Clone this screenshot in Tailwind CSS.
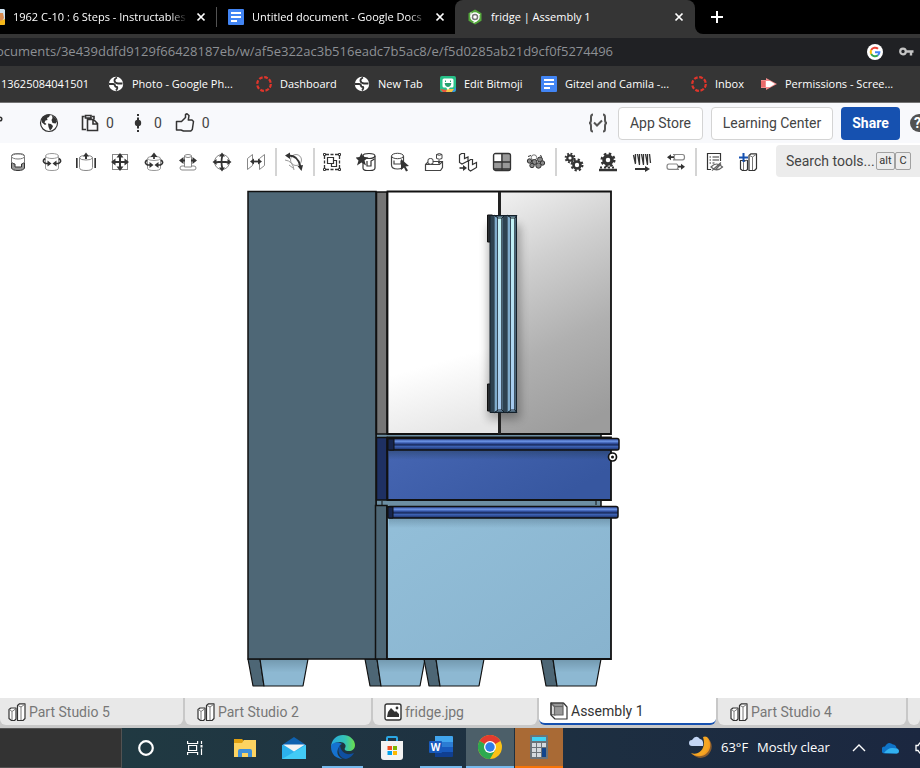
<!DOCTYPE html>
<html lang="en">

<head>
  <meta charset="UTF-8">
  <meta name="viewport" content="width=device-width, initial-scale=1.0">
  <title>fridge | Assembly 1</title>
  <script src="https://cdn.jsdelivr.net/npm/@tailwindcss/browser@4"></script>
</head>

<body class="min-h-screen flex flex-col bg-white overflow-x-hidden font-['Open_Sans','Noto_Sans',sans-serif]">

  <!-- Shared icons -->
  <svg class="hidden">
    <symbol id="close" viewBox="0 0 10 10">
      <path d="M1.500 1.500l7 7M8.500 1.500l-7 7" stroke="#fff" stroke-width="1.700" />
    </symbol>
    <symbol id="docs" viewBox="0 0 16 16">
      <rect width="16" height="16" rx="1" fill="#4285f4" />
      <path d="M3 4h10M3 8h10M3 12h6" stroke="#fff" stroke-width="1.800" />
    </symbol>
    <symbol id="site" viewBox="0 0 16 16">
      <circle cx="8" cy="8" r="7.200" fill="#fff" />
      <path d="M1 8h4q2 0 2 1.500T9 11q1 1-1 3.500M9 1.500q-3 1.500-2.500 3.500T10 7.500h4.500" fill="none" stroke="#353535" stroke-width="1.800" />
    </symbol>
    <symbol id="ring" viewBox="0 0 16 16">
      <circle cx="8" cy="8" r="6.800" fill="none" stroke="#e0352b" stroke-width="2.200" stroke-dasharray="3.740 1.600" />
    </symbol>
    <symbol id="parts" viewBox="0 0 18 18">
      <g fill="#fff" stroke="#333" stroke-width="1.200" stroke-linejoin="round">
        <path d="M1 6.500L3 5h5v11l-1.500 1.500H3.500L1 15.500z" />
        <path d="M9.500 2.500L11.500.8H17V15.500l-2 2H9.500z" />
      </g>
      <path d="M1.500 6.500L4 8.500v8.500M4 8.500L7.500 6M10 2.500l3 1.500v13M13 4l3.500-2.500" fill="none" stroke="#777" />
    </symbol>
  </svg>

  <!-- Browser tabs -->
  <header>
    <div class="h-[34px] flex bg-black text-white text-[11px]">
      <div class="w-[217px] shrink-0 flex items-center">
        <svg class="w-[5px] h-4 shrink-0" viewBox="0 0 5 16">
          <path d="M0 0h4l1 1v14l-1 1H0z" fill="#cfe3f2" />
          <path d="M0 4h3l1 5-2 3H0z" fill="#d98c52" />
          <path d="M0 12l5-2v5l-1 1H0z" fill="#f6b719" />
        </svg>
        <span class="ml-2 w-[174px] overflow-hidden whitespace-nowrap mask-r-from-90%">1962 C-10 : 6 Steps - Instructables</span>
        <button class="ml-[9px] w-[10px]" aria-label="Close tab"><svg class="size-[10px]"><use href="#close" /></svg></button>
        <span class="ml-auto w-px h-5 bg-neutral-600"></span>
      </div>
      <div class="w-[238px] shrink-0 flex items-center pl-[11px] pr-[10px]">
        <svg class="size-4 shrink-0"><use href="#docs" /></svg>
        <span class="ml-2 w-[174px] overflow-hidden whitespace-nowrap mask-r-from-90%">Untitled document - Google Docs</span>
        <button class="ml-auto w-[10px]" aria-label="Close tab"><svg class="size-[10px]"><use href="#close" /></svg></button>
      </div>
      <div class="w-[240px] shrink-0 flex items-center pl-3 pr-[11px] bg-[#353535] rounded-t-lg">
        <svg class="size-4 shrink-0" viewBox="0 0 16 16">
          <path d="M8 .5l6.500 3.700v7.600L8 15.500l-6.500-3.700V4.200z" fill="#55a83c" />
          <circle cx="8" cy="8" r="4" fill="#777" stroke="#fff" stroke-width="1.400" />
          <circle cx="8" cy="8" r="1.800" fill="#fff" />
          <path d="M4 8V3.500M10 4.500l3 1.500M10 11.500L6.500 13.500" stroke="#fff" stroke-width="1.200" />
        </svg>
        <span class="ml-2">fridge | Assembly 1</span>
        <button class="ml-auto w-[10px]" aria-label="Close tab"><svg class="size-[10px]"><use href="#close" /></svg></button>
      </div>
      <div class="flex-1 bg-[#353535]">
        <div class="h-full rounded-bl-lg bg-black flex items-center pl-4">
          <button aria-label="New tab">
            <svg class="size-3" viewBox="0 0 12 12"><path d="M6 0v12M0 6h12" stroke="#fff" stroke-width="2" /></svg>
          </button>
        </div>
      </div>
    </div>

    <!-- Address bar -->
    <div class="bg-[#353535] pt-1">
      <div class="h-7 bg-[#202124] flex items-center overflow-hidden">
        <label class="sr-only" for="address">Address</label>
        <input id="address" class="flex-1 min-w-0 -indent-1 text-[13px] text-[#8d9094] bg-transparent outline-none" value="ocuments/3e439ddfd9129f66428187eb/w/af5e322ac3b516eadc7b5ac8/e/f5d0285ab21d9cf0f5274496">
        <svg class="size-4 shrink-0 mr-4" viewBox="0 0 16 16">
          <circle cx="8" cy="8" r="8" fill="#fff" />
          <g fill="none" stroke-width="2">
            <path d="M4.200 6A4.400 4.400 0 0 1 11 4.800" stroke="#ea4335" />
            <path d="M4.200 10a4.400 4.400 0 0 1 0-4" stroke="#fbbc05" />
            <path d="M4.200 10a4.400 4.400 0 0 0 6.700 1.300" stroke="#34a853" />
            <path d="M8 8.200h4.400a4.400 4.400 0 0 1-1.500 3.100" stroke="#4285f4" />
          </g>
        </svg>
        <svg class="w-[15px] h-4 shrink-0 mr-[6px]" viewBox="0 0 15 16">
          <circle cx="4" cy="7.500" r="2.800" fill="none" stroke="#c4c4c4" stroke-width="2.200" />
          <path d="M7 7.500h7.500M12 7.500v4" stroke="#c4c4c4" stroke-width="2.400" />
        </svg>
      </div>
    </div>

    <!-- Bookmarks -->
    <nav class="h-[37px] bg-[#353535] border-b border-neutral-500 text-white text-[11px] whitespace-nowrap grid grid-cols-[108px_148px_98px_86px_101px_150px_70px_1fr] items-center">
      <a href="#" class="pl-px">13625084041501</a>
      <a href="#" class="flex items-center gap-2"><svg class="size-4"><use href="#site" /></svg>Photo - Google Ph...</a>
      <a href="#" class="flex items-center gap-2"><svg class="size-4"><use href="#ring" /></svg>Dashboard</a>
      <a href="#" class="flex items-center gap-2"><svg class="size-4"><use href="#site" /></svg>New Tab</a>
      <a href="#" class="flex items-center gap-2">
        <svg class="size-4" viewBox="0 0 16 16">
          <rect width="16" height="16" rx="2" fill="#28c088" />
          <path d="M0 13l3 3h4v-2z" fill="#e9573f" />
          <path d="M6 16h6l2-3H7z" fill="#f6c244" />
          <path d="M12 16h2l2-2v-3z" fill="#3b8ded" />
          <path d="M4 2.500h8q1.500 0 1.500 1.500v6q0 1.500-1.500 1.500h-2L8 14l-2-2.500H4Q2.500 11.500 2.500 10V4Q2.500 2.500 4 2.500z" fill="#fff" />
          <path d="M5 7.500h6q-.5 3-3 3t-3-3zM5.500 4.500v1.500M10.500 4.500v1.500" fill="#28a070" stroke="#28a070" />
        </svg>Edit Bitmoji</a>
      <a href="#" class="flex items-center gap-2"><svg class="size-4"><use href="#docs" /></svg>Gitzel and Camila -...</a>
      <a href="#" class="flex items-center gap-2"><svg class="size-4"><use href="#ring" /></svg>Inbox</a>
      <a href="#" class="flex items-center gap-2">
        <svg class="size-4" viewBox="0 0 16 16">
          <path d="M0 4h5V2l11 6-11 6v-2H0z" fill="#f28b8b" />
          <path d="M5 5h4l5 3-5 3H5z" fill="#fff" />
          <path d="M0 5h4v6H0z" fill="#e96a6a" />
        </svg>Permissions - Scree...</a>
    </nav>
  </header>

  <!-- Document header -->
  <div class="h-10 bg-[#f8f9fc] flex items-center overflow-hidden font-['Roboto',sans-serif] text-sm text-[#444]">
    <svg class="w-[3px] h-5 shrink-0" viewBox="0 0 3 20"><circle cx="0" cy="6" r="1.800" fill="none" stroke="#333" stroke-width="1.500" /></svg>
    <svg class="size-5 ml-9 shrink-0" viewBox="0 0 20 20">
      <circle cx="10" cy="10" r="8.500" fill="#fff" stroke="#333" stroke-width="1.200" />
      <path d="M2.500 7q1-4 5.500-5.500l3 .5-1 2-2 1 .5 2-2 .5-1 2 2 1.500L6 12 3 9.500zM9 10.500l3 .5 2 2-1 2.500-2 2-1.500-3.500zM13 2.500q4 2 5 6l-1.500 2-3-.5-1-3 1-2z" fill="#333" />
    </svg>
    <svg class="size-[18px] ml-[22px] shrink-0" viewBox="0 0 18 18">
      <path d="M5 15.500H1.500v-13h2M13 5V2.500h-2M4.500 1.500H10V4H4.500zM6.500 5.500h6l4 4v7h-10zM12 5.500V10h4.500" fill="none" stroke="#333" stroke-width="1.600" />
    </svg>
    <span class="ml-[7px]">0</span>
    <svg class="w-2 h-5 ml-5 shrink-0" viewBox="0 0 8 20">
      <path d="M4 1v2M4 4.500v3M4 12.500v3M4 17v2" stroke="#333" stroke-width="2" />
      <circle cx="4" cy="10" r="3.200" fill="#333" />
    </svg>
    <span class="ml-3">0</span>
    <svg class="size-5 ml-[13px] shrink-0" viewBox="0 0 20 20">
      <path d="M1.500 8.500h5l4-4V1.500l1.500-.7 2 1.700-.7 4.500H17l1.500 1.500-1.200 8-1.500 1.500H8.500L6 17H1.500z" fill="none" stroke="#333" stroke-width="1.500" stroke-linejoin="round" />
    </svg>
    <span class="ml-[7px]">0</span>
    <div class="ml-auto flex items-center gap-2 shrink-0">
      <svg class="size-5 mr-[2px]" viewBox="0 0 20 20">
        <path d="M5 1.500Q3 1.500 3 4v3q0 3-2 3 2 0 2 3v3q0 2.500 2 2.500M15 1.500q2 0 2 2.500v3q0 3 2 3-2 0-2 3v3q0 2.500-2 2.500M6 9.500l3 3 5-5" fill="none" stroke="#555" stroke-width="2" />
      </svg>
      <button class="h-[33px] w-[85px] bg-white border border-neutral-300 rounded">App Store</button>
      <button class="h-[33px] w-[122px] bg-white border border-neutral-300 rounded">Learning Center</button>
      <button class="h-[33px] w-[59px] bg-[#1651b0] text-white font-bold rounded">Share</button>
      <span class="ml-[2px] w-[10px] h-[18px] rounded-l-full bg-neutral-600 text-white font-bold flex items-center pl-1 overflow-hidden">?</span>
    </div>
  </div>

  <!-- Assembly tools -->
  <div class="h-[38px] flex items-center pl-px overflow-hidden font-['Roboto',sans-serif] *:shrink-0">
    <button class="w-[34px] grid place-items-center" aria-label="Fastened mate">
      <svg class="size-5" viewBox="0 0 20 20" fill="none">
        <path d="M3.500 10v6q1 2.500 6.500 2.500t6.500-2.500v-6q-1 2-3 2v3H7v-3q-2.500 0-3.500-2z" fill="#999" stroke="#333" />
        <path d="M3.500 11V4q0-2.500 6.500-2.500T16.500 4v7" stroke="#777" />
        <ellipse cx="10" cy="4.500" rx="6.500" ry="2.500" fill="#fff" stroke="#777" />
      </svg>
    </button>
    <button class="w-[34px] grid place-items-center" aria-label="Revolute mate">
      <svg class="size-5" viewBox="0 0 20 20" fill="none">
        <path d="M3.500 4.500V16q0 2.500 6.500 2.500t6.500-2.500V4.500" stroke="#999" />
        <ellipse cx="10" cy="4" rx="6.500" ry="2.500" fill="#fff" stroke="#999" />
        <path d="M3 6.500q-3.500 3 .5 5H6M17 6.500q3.500 3-.5 5H14" stroke="#333" stroke-width="1.700" />
        <path d="M5.500 8.500l4 3-4 3zM14.500 8.500l-4 3 4 3z" fill="#333" />
      </svg>
    </button>
    <button class="w-[34px] grid place-items-center" aria-label="Slider mate">
      <svg class="size-5" viewBox="0 0 20 20" fill="none">
        <path d="M3.500 6v9.500q0 3 6.500 3t6.500-3V6q0-2.500-6.500-2.500T3.500 6q1 2 6.500 2t6.500-2" stroke="#888" />
        <path d="M.8 6v10M19.200 6v10" stroke="#333" stroke-width="1.700" />
        <path d="M10 7V3" stroke="#333" stroke-width="2" />
        <path d="M7 4.500l3-4 3 4z" fill="#333" />
      </svg>
    </button>
    <button class="w-[34px] grid place-items-center" aria-label="Planar mate">
      <svg class="size-5" viewBox="0 0 20 20" fill="none">
        <rect x="2.500" y="2.500" width="15" height="15" stroke="#888" />
        <path d="M10 4v12M4 10h12" stroke="#333" stroke-width="2" />
        <path d="M6.500 5.500L10 1l3.500 4.500zM6.500 14.500L10 19l3.500-4.500zM5.500 6.500L1 10l4.500 3.500zM14.500 6.500L19 10l-4.500 3.500z" fill="#333" />
      </svg>
    </button>
    <button class="w-[34px] grid place-items-center" aria-label="Cylindrical mate">
      <svg class="size-5" viewBox="0 0 20 20" fill="none">
        <path d="M3.500 6.500V16q0 2.500 6.500 2.500t6.500-2.500V6.500q0-2-6.500-2t-6.500 2q1 2 6.500 2t6.500-2" stroke="#999" />
        <path d="M3 8q-3.500 3 .5 5H6M17 8q3.500 3-.5 5H14M10 7V3" stroke="#333" stroke-width="1.700" />
        <path d="M5.500 10l4 3-4 3zM14.500 10l-4 3 4 3zM6.500 5L10 .5 13.500 5z" fill="#333" />
      </svg>
    </button>
    <button class="w-[34px] grid place-items-center" aria-label="Pin slot mate">
      <svg class="size-5" viewBox="0 0 20 20" fill="none">
        <path d="M6.500 4v11h7V4q0-1.500-3.500-1.500T6.500 4q1 1.500 3.500 1.500T13.500 4M6.500 14H4q-2 0-2 2t2 2h12q2 0 2-2t-2-2h-2.500" stroke="#888" />
        <path d="M3 8.500h4M13 8.500h4" stroke="#333" stroke-width="1.800" />
        <path d="M5.500 5L1 8.500 5.500 12zM14.500 5L19 8.500 14.500 12z" fill="#333" />
      </svg>
    </button>
    <button class="w-[34px] grid place-items-center" aria-label="Ball mate">
      <svg class="size-5" viewBox="0 0 20 20" fill="none">
        <circle cx="10" cy="10" r="7.500" stroke="#888" />
        <path d="M10.500 3q-2 7 0 14M3 10.500q7-1.500 14 0" stroke="#333" stroke-width="1.800" />
        <path d="M7 4.500L10 .5l3 4zM7 15.500l3 4 3-4zM4.500 7L.5 10l4 3zM15.500 7l4 3-4 3z" fill="#333" />
      </svg>
    </button>
    <button class="w-[34px] grid place-items-center" aria-label="Parallel mate">
      <svg class="size-5" viewBox="0 0 20 20" fill="none">
        <path d="M1.500 6.500l5-4v11l-5 4zM13.500 6.500l5-4v11l-5 4z" stroke="#888" />
        <path d="M6 9.500h8" stroke="#333" stroke-width="1.800" />
        <path d="M8 6.500l-4 3 4 3zM12 6.500l4 3-4 3z" fill="#333" />
      </svg>
    </button>
    <span class="w-1 h-7 border-r-2 border-neutral-300"></span>
    <button class="w-[34px] grid place-items-center" aria-label="Tangent mate">
      <svg class="size-5" viewBox="0 0 20 20" fill="none">
        <circle cx="12" cy="8" r="5.500" stroke="#999" />
        <path d="M1 8q8 1 9 10M5 13l4 3" stroke="#999" />
        <path d="M5 3.500q9 0 11.500 11" stroke="#333" stroke-width="1.800" />
        <path d="M6 .5L1 3.500 6 7zM13.500 14l5.500-1-1.500 6z" fill="#333" />
      </svg>
    </button>
    <span class="w-1 h-7 border-r-2 border-neutral-300"></span>
    <button class="w-[34px] grid place-items-center" aria-label="Group">
      <svg class="size-5" viewBox="0 0 20 20" fill="none" stroke="#333">
        <path d="M4 2.500h12M4 17.500h12M2.500 4v12M17.500 4v12" stroke-width="1.300" stroke-dasharray="3 1.500" />
        <path d="M1.500 1.500h2v2h-2zM16.500 1.500h2v2h-2zM1.500 16.500h2v2h-2zM16.500 16.500h2v2h-2z" fill="#fff" />
        <path d="M5.500 5.500h6v6h-6zM9.500 11.500v3h5v-6h-3" stroke-width="1.200" />
      </svg>
    </button>
    <button class="w-[34px] grid place-items-center" aria-label="Mate connector">
      <svg class="size-5" viewBox="0 0 20 20" fill="none">
        <path d="M7 4q0-2.500 6-2.500t6 2.500v12q0 2.500-5 2.500h-3q-4 0-4-2.500z" fill="#fff" stroke="#333" stroke-width="1.200" />
        <path d="M7 4q1 2.500 6 2.500T19 4M11 9v5h4V9l3.500-2" stroke="#333" stroke-width="1.200" />
        <path d="M5.500 1l2 4 5 .5-4 3 1.500 5-4.500-3-4.500 3 1.500-5-3-3 4-.5z" fill="#333" />
      </svg>
    </button>
    <button class="w-[34px] grid place-items-center" aria-label="Select part">
      <svg class="size-5" viewBox="0 0 20 20" fill="none">
        <path d="M1.500 4v9q0 4 6 4t6-4V4M4 8.500V12h7V8.500" stroke="#444" stroke-width="1.200" />
        <ellipse cx="7.500" cy="4" rx="6" ry="2.700" fill="#fff" stroke="#444" />
        <path d="M11 7l8 7-3.500.5 2.500 4-2 1-2-4-3 2.500z" fill="#333" />
      </svg>
    </button>
    <button class="w-[34px] grid place-items-center" aria-label="Snap mode">
      <svg class="size-5" viewBox="0 0 20 20" fill="none" stroke="#444">
        <path d="M1.500 12.500l3-3h14v6l-2 3h-15zM1.500 12.500h14l3-3" stroke-width="1.200" />
        <path d="M4 11.500V8q0-1.500 2.500-1.500T9 8v3.500q-2.500 1.500-5 0zM12.500 2.500v4q3 1.500 5.500 0v-4q-2.500-2-5.500 0 2.500 1.500 5.500 0" fill="#fff" />
        <path d="M15 8.500v3" stroke-width="2" />
      </svg>
    </button>
    <button class="w-[34px] grid place-items-center" aria-label="Replicate">
      <svg class="size-5" viewBox="0 0 20 20" fill="none" stroke="#333" stroke-width="1.200">
        <path d="M1.500 3l2-1.500h3v5L10 5v4l-6 3-2.500-1.500zM10.500 9l2-1.500h2v5l4-2v5l-6 3.500-2-1.500z" />
        <path d="M1.500 16h5" stroke-width="1.600" />
        <path d="M5 13l4 3-4 3z" fill="#333" stroke="none" />
      </svg>
    </button>
    <button class="w-[34px] grid place-items-center" aria-label="Linear pattern">
      <svg class="size-5" viewBox="0 0 20 20">
        <rect x="1.500" y="1.500" width="17" height="17" rx="2" fill="#999" stroke="#333" stroke-width="1.300" />
        <path d="M2.500 2.500h6.500v6.500H2.500z" fill="#fff" />
        <path d="M10 1.500v17M1.500 10h17M2 17h16" stroke="#333" stroke-width="1.300" />
      </svg>
    </button>
    <button class="w-[34px] grid place-items-center" aria-label="Circular pattern">
      <svg class="size-5" viewBox="0 0 20 20" fill="#888" stroke="#333">
        <circle cx="8" cy="5.500" r="2.700" fill="#fff" stroke="#777" />
        <circle cx="3.500" cy="9" r="2.200" />
        <circle cx="8.500" cy="10" r="2.500" />
        <circle cx="14" cy="7.500" r="2.500" />
        <circle cx="16.500" cy="11" r="2.200" />
        <circle cx="6" cy="13.500" r="2.200" />
        <circle cx="12.500" cy="13.500" r="2.700" />
        <path d="M2 4.500l3-1M14 3.500l2 1" />
      </svg>
    </button>
    <span class="w-1 h-7 border-r-2 border-neutral-300"></span>
    <button class="w-[34px] grid place-items-center" aria-label="Gear relation">
      <svg class="size-5" viewBox="0 0 20 20" fill="none" stroke="#333">
        <circle cx="6" cy="6" r="2.700" stroke-width="2.200" />
        <circle cx="6" cy="6" r="4.400" stroke-width="2" stroke-dasharray="1.800 1.656" />
        <circle cx="13" cy="13" r="3.500" stroke-width="2.600" />
        <circle cx="13" cy="13" r="5.400" stroke-width="2.200" stroke-dasharray="2.200 2.041" />
      </svg>
    </button>
    <button class="w-[34px] grid place-items-center" aria-label="Rack and pinion relation">
      <svg class="size-5" viewBox="0 0 20 20" fill="none" stroke="#333">
        <circle cx="10" cy="8" r="4" stroke-width="3.500" />
        <circle cx="10" cy="8" r="6.300" stroke-width="2.400" stroke-dasharray="2.500 2.448" />
        <path d="M1 18h18" stroke-width="2.500" />
        <path d="M2 15.500h16" stroke-width="2" stroke-dasharray="2 2" />
      </svg>
    </button>
    <button class="w-[34px] grid place-items-center" aria-label="Screw relation">
      <svg class="size-5" viewBox="0 0 20 20" fill="none" stroke="#333">
        <path d="M1.500 3l2 9M5.500 2l2 11M9.500 2l2 11M13.500 2l2 11M17.500 2l1 9M3.500 2v9M7.500 2v10M11.500 2v10M15.500 2v10" stroke-width="1.300" />
        <path d="M3 17h11" stroke-width="2" />
        <path d="M13 14l5 3-5 3z" fill="#333" stroke="none" />
      </svg>
    </button>
    <button class="w-[34px] grid place-items-center" aria-label="Linear relation">
      <svg class="size-5" viewBox="0 0 20 20" fill="none">
        <path d="M7 2.500h9.500q2 0 2 2.700t-2 2.700H7M11 12H3q-2 0-2 2.700t2 2.700h10M9 2.500q-2 2.700 0 5.400M11 12q2 2.700 0 5.400" stroke="#888" stroke-width="1.200" />
        <path d="M4 5.200h4M12 14.700h4" stroke="#333" stroke-width="1.800" />
        <path d="M5 2.200l-4 3 4 3zM15 11.700l4 3-4 3z" fill="#333" />
      </svg>
    </button>
    <span class="w-1 h-7 border-r-2 border-neutral-300"></span>
    <button class="w-[34px] grid place-items-center" aria-label="Bill of materials">
      <svg class="size-5" viewBox="0 0 20 20" fill="none" stroke="#333">
        <path d="M7 17.500H3.500v-16h13V9" stroke-width="1.200" />
        <path d="M5.500 5h1.500M5.500 8h1.500M5.500 11h1.500M8.500 5H15M8.500 8H15M8.500 11h2" />
        <path d="M7 15q5.500-6 11.500 0-6 5.500-11.500 0zM8 18.500l9-8M11 18l6-6" stroke="#666" stroke-width="1.200" />
      </svg>
    </button>
    <button class="w-[34px] grid place-items-center" aria-label="Create part studio">
      <svg class="size-5" viewBox="0 0 20 20">
        <g fill="#fff" stroke="#333" stroke-width="1.200" stroke-linejoin="round">
          <path d="M2.500 8.500H9.500v9L8 18.500H4.500l-2-1.500z" />
          <path d="M11 3.500L13 1.800h5.500V16.500l-2 2H11z" />
        </g>
        <path d="M5.500 10v8M5.500 10l3.500-2M11.500 3.500l3 1.500v13M14.500 5l3.500-2.500" fill="none" stroke="#777" />
        <path d="M5.500 1v9M1 5.500h9" stroke="#1651b0" stroke-width="2" />
      </svg>
    </button>
    <div class="flex-1 self-start mt-[2px] ml-[11px] h-8 bg-[#ececec] rounded-l flex items-center pl-[10px] text-[#333]">
      <label class="sr-only" for="search-tools">Search tools</label>
      <input id="search-tools" class="w-[90px] text-sm placeholder:text-[#444] bg-transparent outline-none" placeholder="Search tools...">
      <kbd class="h-[18px] w-[19px] flex items-center justify-center font-['Roboto',sans-serif] text-[11px] border border-neutral-400 rounded-xs">alt</kbd>
      <kbd class="h-[18px] w-4 flex items-center justify-center font-['Roboto',sans-serif] text-[11px] border border-neutral-400 rounded-xs">C</kbd>
    </div>
  </div>

  <!-- Model view -->
  <main class="flex-1 min-h-0 flex">
    <svg class="w-full" viewBox="0 181 920 517" role="img" aria-label="Fridge assembly">
      <defs>
        <linearGradient id="doorL" gradientUnits="userSpaceOnUse" x1="410" y1="370" x2="430" y2="440">
          <stop offset="0" stop-color="#fff" />
          <stop offset="1" stop-color="#e6e6e6" />
        </linearGradient>
        <linearGradient id="doorR" gradientUnits="userSpaceOnUse" x1="500" y1="200" x2="610" y2="410">
          <stop offset="0" stop-color="#eee" />
          <stop offset="0.300" stop-color="#cfcfcf" />
          <stop offset="0.650" stop-color="#b0b0b0" />
          <stop offset="1" stop-color="#9c9c9c" />
        </linearGradient>
        <linearGradient id="drawer" x1="0" y1="0" x2="1" y2="0.500">
          <stop offset="0" stop-color="#4767b4" />
          <stop offset="1" stop-color="#3757a0" />
        </linearGradient>
        <linearGradient id="freezer" x1="0" y1="0" x2="1" y2="1">
          <stop offset="0" stop-color="#93bfd9" />
          <stop offset="1" stop-color="#88b3ce" />
        </linearGradient>
        <linearGradient id="bar" x1="0" y1="0" x2="0" y2="1">
          <stop offset="0" stop-color="#2c4794" />
          <stop offset="0.250" stop-color="#6b92e2" />
          <stop offset="0.400" stop-color="#3758ab" />
          <stop offset="0.550" stop-color="#182a5c" />
          <stop offset="0.700" stop-color="#3d62b4" />
          <stop offset="1" stop-color="#1a2c60" />
        </linearGradient>
        <linearGradient id="grip" gradientUnits="userSpaceOnUse" x1="0" y1="215" x2="0" y2="413">
          <stop offset="0" stop-color="#c4f4f6" />
          <stop offset="1" stop-color="#a4c8ee" />
        </linearGradient>
        <linearGradient id="foot" x1="0" y1="0" x2="0" y2="1">
          <stop offset="0" stop-color="#7298ae" />
          <stop offset="0.500" stop-color="#8db8d2" />
        </linearGradient>
        <linearGradient id="shade" x1="0" y1="0" x2="0" y2="1">
          <stop offset="0" stop-color="#1b3040" stop-opacity="0.400" />
          <stop offset="1" stop-color="#1b3040" stop-opacity="0" />
        </linearGradient>
        <filter id="soft" x="-1" y="-0.100" width="3" height="1.200">
          <feGaussianBlur stdDeviation="5" />
        </filter>
        <clipPath id="doors"><path d="M388 192h223v242H388z" /></clipPath>
        <g id="leg" stroke="#111" stroke-width="1.200" stroke-linejoin="round">
          <path d="M0 659h12l4 27H5z" fill="#4d6675" />
          <path d="M12 659h48l-5 27H16z" fill="url(#foot)" />
        </g>
      </defs>

      <!-- legs -->
      <use href="#leg" x="248" />
      <use href="#leg" x="365" />
      <use href="#leg" x="424" />
      <use href="#leg" x="541" />

      <!-- cabinet -->
      <g stroke="#111" stroke-width="1.500">
        <path d="M376 430h225v80H376z" fill="#6d8fa3" />
        <path d="M248 191.500h128V659H248z" fill="#4e6776" />
      </g>

      <!-- doors -->
      <path d="M376.500 192H387v242h-10.500z" fill="#757575" stroke="#111" stroke-width="1.500" />
      <path d="M387 192h113v242H387z" fill="url(#doorL)" />
      <path d="M500 192h111v242H500z" fill="url(#doorR)" />
      <g clip-path="url(#doors)">
        <path d="M488 225h32v194h-32z" fill="#000" opacity="0.300" filter="url(#soft)" />
      </g>
      <path d="M387.500 191.500H611V434H387.500z" fill="none" stroke="#111" stroke-width="1.800" />
      <path d="M499.500 192v242" stroke="#222" stroke-width="3" />

      <!-- door handles -->
      <path d="M487.500 215h5v27h-5zM487.500 384h5v27h-5z" fill="#2a2d30" stroke="#111" />
      <path d="M490 215h27v198h-27z" fill="#4a6578" />
      <path d="M490 215h4v198h-4zM503 215h4v198h-4z" fill="#2e4250" />
      <path d="M495 217h3v194h-3zM508 217h3v194h-3z" fill="#7fabcb" />
      <path d="M498 217h4v194h-4zM511 217h4v194h-4z" fill="url(#grip)" />
      <path d="M497.500 218v192M501.500 218v192M510.500 218v192M514.500 218v192" stroke="#14202a" stroke-opacity="0.700" fill="none" />
      <path d="M490 215.500h26.500v197H490zM494 215l4 3h4l3-3M507 215l4 3h4l2-3M494 413l4-3h4l3 3M507 413l4-3h4l2 3" fill="none" stroke="#14202a" />

      <!-- middle drawer -->
      <path d="M376.500 437.500H387V500h-10.500z" fill="#1e3063" stroke="#111" stroke-width="1.500" />
      <path d="M387.500 437.500H611V500H387.500z" fill="url(#drawer)" stroke="#111" stroke-width="1.800" />
      <path d="M389 450h221v10H389z" fill="url(#shade)" />
      <rect x="388" y="438.500" width="231" height="11.500" rx="2" fill="url(#bar)" stroke="#111" stroke-width="1.500" />
      <path d="M388 439h6v11h-6z" fill="#17264f" stroke="#111" />
      <path d="M382 501v4M596 501v4" stroke="#111" />

      <!-- freezer drawer -->
      <path d="M375.500 505.500H387V659h-11.500z" fill="#4e6776" stroke="#111" stroke-width="1.500" />
      <path d="M387 507h224v152H387z" fill="url(#freezer)" stroke="#111" stroke-width="1.800" />
      <path d="M389 518h221v10H389z" fill="url(#shade)" opacity="0.600" />
      <rect x="388" y="506.500" width="230" height="11.500" rx="2" fill="url(#bar)" stroke="#111" stroke-width="1.500" />
      <path d="M388 507h5v11h-5z" fill="#17264f" stroke="#111" />

      <!-- origin -->
      <circle cx="612.500" cy="457" r="4" fill="#fff" stroke="#111" stroke-width="1.700" />
      <circle cx="612.500" cy="457" r="1.500" fill="#111" />
    </svg>
  </main>

  <!-- Document tabs -->
  <nav class="h-[30px] pb-[3px] bg-[#c8c8c8] grid grid-cols-[183px_186px_164px_177px_188px_1fr] gap-[2px] font-['Roboto',sans-serif] text-sm text-[#777] *:flex *:items-center *:gap-[3px] *:rounded-b-md *:bg-[#e8e8e8]">
    <a href="#" class="pl-2"><svg class="size-[18px]"><use href="#parts" /></svg>Part Studio 5</a>
    <a href="#" class="pl-3"><svg class="size-[18px]"><use href="#parts" /></svg>Part Studio 2</a>
    <a href="#" class="pl-[11px]">
      <svg class="size-[18px]" viewBox="0 0 18 18">
        <rect x="1" y="1" width="16" height="16" rx="2" fill="#fff" stroke="#333" stroke-width="1.400" />
        <path d="M3 14l1-5 3-4 4 4 1-1 3 3v3z" fill="#333" />
        <circle cx="13" cy="5" r="1.400" fill="#333" />
      </svg>fridge.jpg</a>
    <a href="#" class="pl-[11px] bg-white! border-b-2 border-[#1651b0] text-[#333]">
      <svg class="size-[18px]" viewBox="0 0 18 18" stroke-width="1.200" stroke-linejoin="round">
        <path d="M1 1h12.500L17 5v12H5l-4-4z" fill="#fff" />
        <path d="M1 1l4 4v8l-4-.5z" fill="#ddd" stroke="#555" />
        <path d="M4.500 4.500L1 1h12v12H4.500z" fill="#999" stroke="#666" />
        <path d="M4.500 4.500H13" stroke="#666" />
        <path d="M1 1h12.500L17 5v12H5l-4-4z" fill="none" stroke="#333" />
      </svg>Assembly 1</a>
    <a href="#" class="pl-3"><svg class="size-[18px]"><use href="#parts" /></svg>Part Studio 4</a>
    <span></span>
  </nav>

  <!-- Taskbar -->
  <footer class="h-10 flex items-stretch bg-linear-to-r from-[#213c42] to-[#1b2740] text-white text-[13px] overflow-hidden whitespace-nowrap">
    <div class="w-[122px] shrink-0 bg-[#333] border border-l-0 border-neutral-600"></div>
    <button class="w-12 mr-px grid place-items-center" aria-label="Cortana">
      <svg class="size-4" viewBox="0 0 16 16"><circle cx="8" cy="8" r="6.800" fill="none" stroke="#fff" stroke-width="2.200" /></svg>
    </button>
    <button class="w-12 mr-px grid place-items-center" aria-label="Task view">
      <svg class="size-4" viewBox="0 0 16 16" fill="none" stroke="#fff" stroke-width="1.200">
        <path d="M.6 1v2.500h10V1M.6 15v-2.500h10V15M1.600 5.500h8v5h-8zM14.500 1v3M14.500 8.500V15" />
        <path d="M13.500 5h2v2.500h-2z" fill="#fff" stroke="none" />
      </svg>
    </button>
    <button class="w-[49px] grid place-items-center" aria-label="File Explorer">
      <svg class="size-6" viewBox="0 0 24 24">
        <path d="M1 3h8l2 2v4H1z" fill="#e0a010" />
        <path d="M1 7h8l2-3h12v17H1z" fill="#fcd361" />
        <path d="M5 21v-6q0-2 2-2h10q2 0 2 2v6h-4v-4H9v4z" fill="#3f8fd8" />
      </svg>
    </button>
    <button class="w-[49px] grid place-items-center" aria-label="Mail">
      <svg class="size-6" viewBox="0 0 24 24">
        <path d="M0 9l12-8 12 8v6H0z" fill="#0f62b0" />
        <path d="M0 9h24v14H0z" fill="#2cb0ec" />
        <path d="M0 23L24 9v14z" fill="#42cbf6" />
        <path d="M1 8.500h22L12 15.500z" fill="#f4f4f4" />
      </svg>
    </button>
    <button class="w-[49px] px-1 flex" aria-label="Edge">
      <span class="w-full h-full grid place-items-center border-b-2 border-[#76b9ed]">
        <svg class="size-6" viewBox="0 0 24 24">
          <defs>
            <linearGradient id="edgeTop" x1="0" y1="0.500" x2="1" y2="0.500">
              <stop offset="0" stop-color="#26a9e0" />
              <stop offset="0.600" stop-color="#35c3b4" />
              <stop offset="1" stop-color="#6be04a" />
            </linearGradient>
          </defs>
          <path d="M0 13C0 4 6 0 12 0c7 0 12 5 12 10 0 4-3 6-6 6-4 0-5-1.500-4-3 2-3-1-6-5-6-5 0-9 3-9 6z" fill="url(#edgeTop)" />
          <path d="M0 12c0 7 5 12 12 12-4-1-8-6-4-12 1-2 2-3 3-3-5-3-11-1-11 3z" fill="#1572cf" />
          <path d="M9 10c-4 5 0 14 6 14 4-1 7-4 8-6-7 3-13 0-14-8z" fill="#0f4fa0" />
        </svg>
      </span>
    </button>
    <button class="w-[49px] grid place-items-center" aria-label="Microsoft Store">
      <svg class="size-6" viewBox="0 0 24 24">
        <path d="M7 6V2q0-1 1-1h8q1 0 1 1v4" fill="none" stroke="#2ba7e4" stroke-width="2" />
        <path d="M1 5h22v16q0 3-3 3H4q-3 0-3-3z" fill="#f3f3f3" />
        <path d="M7.500 10H12v4H7.500z" fill="#f04e23" />
        <path d="M13 10h4v4h-4z" fill="#7eb800" />
        <path d="M7.500 15H12v4H7.500z" fill="#00a2ed" />
        <path d="M13 15h4v4h-4z" fill="#fdb900" />
      </svg>
    </button>
    <button class="w-[50px] px-1 flex" aria-label="Word">
      <span class="w-full h-full grid place-items-center border-b-2 border-[#76b9ed]">
        <svg class="size-6" viewBox="0 0 24 24">
          <path d="M6 1h17q1 0 1 1v5H6z" fill="#41a5ee" />
          <path d="M6 7h18v5H6z" fill="#2b7cd3" />
          <path d="M6 12h18v5H6z" fill="#185abd" />
          <path d="M6 17h18v4q0 1-1 1H6z" fill="#103f91" />
          <rect y="6" width="13" height="12" rx="1" fill="#185abd" />
          <text x="6.500" y="15.500" text-anchor="middle" font-family="Open Sans" font-size="10" font-weight="700" fill="#fff">W</text>
        </svg>
      </span>
    </button>
    <button class="w-12 mr-px grid place-items-center bg-[#4c5f69] border-b-2 border-[#76b9ed]" aria-label="Chrome">
      <svg class="size-6" viewBox="0 0 24 24">
        <circle cx="12" cy="12" r="12" fill="#fbc116" />
        <path d="M12 12L1.600 6A12 12 0 0 1 22.400 6z" fill="#e33b2e" />
        <path d="M1.600 6A12 12 0 0 0 12 24l5.200-9L12 12z" fill="#2da94f" />
        <circle cx="12" cy="12" r="6" fill="#fff" />
        <circle cx="12" cy="12" r="4.700" fill="#2f7de8" />
      </svg>
    </button>
    <button class="w-12 grid place-items-center bg-[#a96a35] border-b-2 border-[#f77408]" aria-label="Calculator">
      <svg class="size-6" viewBox="0 0 24 24">
        <rect x="3" width="18" height="24" rx="1" fill="#6b7378" />
        <path d="M5 2h14v4H5z" fill="#3fd3f6" />
        <path d="M5 8h4v4H5zM10 8h4v4h-4zM15 8h4v4h-4zM5 13h4v4H5zM10 13h4v4h-4zM5 18h4v4H5zM10 18h4v4h-4z" fill="#d4dade" />
        <path d="M15 13h4v9h-4z" fill="#11458c" />
      </svg>
    </button>
    <div class="ml-auto shrink-0 flex items-center">
      <svg class="size-6" viewBox="0 0 24 24">
        <path d="M18 1a11 11 0 1 1-16 16c7 3 16-4 12-16q2-1 4 0z" fill="#f5a623" />
        <path d="M18 1q9 9 1 18-8 7-17-2 8 5 13 1 8-7 3-17z" fill="#ee8a1e" opacity="0.500" />
        <path d="M3 10a3 3 0 0 1 0-6q4-6 8-1 4 1 3 7z" fill="#c3d6f5" />
      </svg>
      <span class="ml-2 w-9">63°F</span>
      <span class="w-[95px]">Mostly clear</span>
      <svg class="w-[14px] h-2" viewBox="0 0 14 8"><path d="M1 7l6-6 6 6" fill="none" stroke="#fff" stroke-width="1.400" /></svg>
      <svg class="w-[17px] h-3 ml-4" viewBox="0 0 17 12">
        <path d="M3 11.500a3.500 3.500 0 0 1 0-7q3-6 8-2 3 0 3.500 3.500 2.500 1 2 3.500t-3 2z" fill="#0f74c8" />
        <path d="M2 11q4-5 8-5 7 0 7 3t-3 2.500z" fill="#32b1f0" />
      </svg>
      <svg class="w-[5px] h-4 ml-4" viewBox="0 0 5 16"><path d="M5 2.500L3 5.500H1v5h2l2 3" fill="none" stroke="#fff" stroke-width="1.300" /></svg>
    </div>
  </footer>
</body>

</html>
